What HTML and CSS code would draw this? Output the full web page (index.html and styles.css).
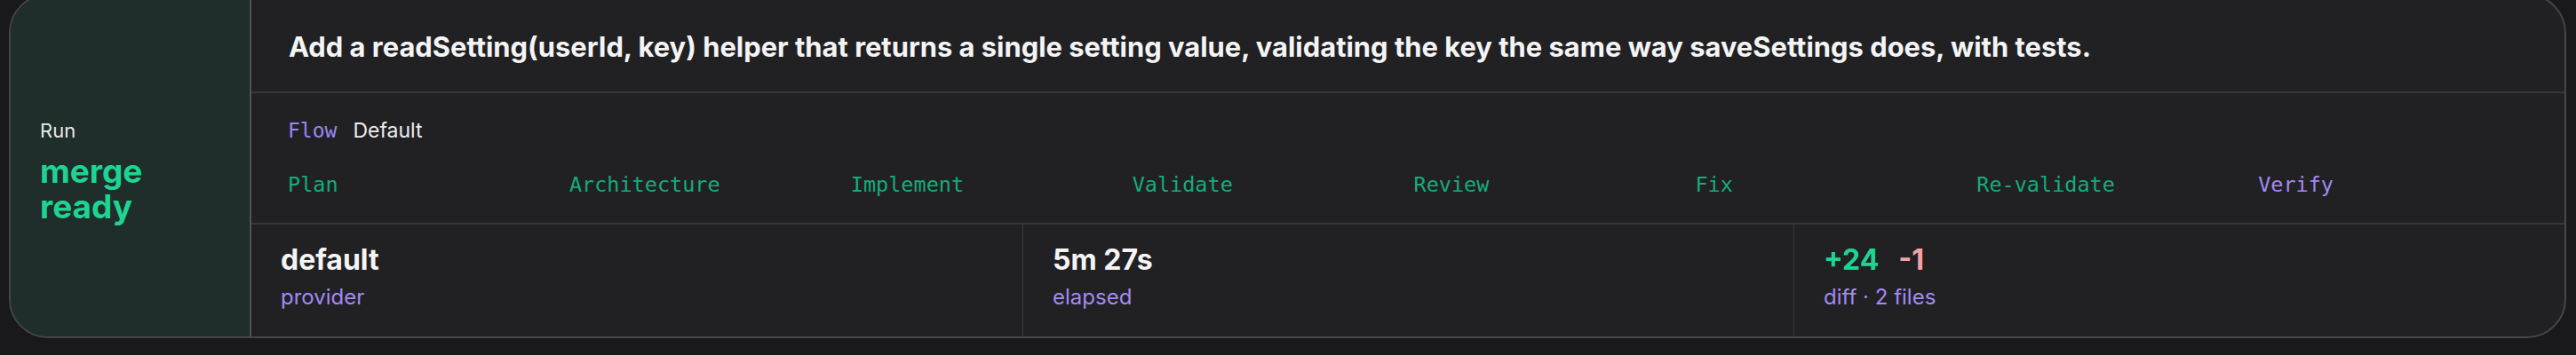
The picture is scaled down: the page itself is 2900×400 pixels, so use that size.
FILE: index.html
```html
<!DOCTYPE html>
<html lang="en">
<head>
<meta charset="utf-8">
<title>Run card</title>
<link rel="stylesheet" href="styles.css">
</head>
<body>
<div class="page">
  <section class="card">
    <aside class="status">
      <div class="status-label">Run</div>
      <div class="status-value">merge<br>ready</div>
    </aside>
    <div class="body">
      <div class="title">Add a readSetting(userId, key) helper that returns a single setting value, validating the key the same way saveSettings does, with tests.</div>
      <div class="flow">
        <div class="flow-head"><span class="mono purple">Flow</span><span class="flow-name">Default</span></div>
        <div class="steps">
          <span class="step done">Plan</span>
          <span class="step done">Architecture</span>
          <span class="step done">Implement</span>
          <span class="step done">Validate</span>
          <span class="step done">Review</span>
          <span class="step done">Fix</span>
          <span class="step done">Re-validate</span>
          <span class="step current">Verify</span>
        </div>
      </div>
      <div class="stats">
        <div class="stat">
          <div class="stat-value">default</div>
          <div class="stat-label">provider</div>
        </div>
        <div class="stat">
          <div class="stat-value">5m 27s</div>
          <div class="stat-label">elapsed</div>
        </div>
        <div class="stat">
          <div class="stat-value"><span class="add">+24</span><span class="del">-1</span></div>
          <div class="stat-label">diff · 2 files</div>
        </div>
      </div>
    </div>
  </section>
</div>
</body>
</html>
```
FILE: styles.css
```css
html, body {
  margin: 0;
  padding: 0;
  background: #19191b;
  overflow: hidden;
}

body {
  font-family: Inter, "Noto Sans", "Liberation Sans", sans-serif;
  color: #f2f2f3;
}

.page {
  margin-top: -7px;
  padding: 0 11px 0 10px;
}

.card {
  display: grid;
  grid-template-columns: 271px 1fr;
  height: 388px;
  box-sizing: border-box;
  border: 2px solid #464648;
  border-radius: 44px;
  overflow: hidden;
  background: #212123;
}

.status {
  background: #1f2d2b;
  border-right: 2px solid #4a5553;
  display: flex;
  flex-direction: column;
  justify-content: center;
  padding: 11px 0 0 33px;
}

.status-label {
  font-size: 22px;
  line-height: 28px;
  color: #e6e8e7;
}

.status-value {
  margin-top: 12px;
  font-size: 37px;
  line-height: 40px;
  font-weight: 700;
  color: #1fd392;
}

.body {
  display: flex;
  flex-direction: column;
  min-width: 0;
}

.title {
  height: 110px;
  box-sizing: border-box;
  display: flex;
  align-items: center;
  padding: 6px 42px 0;
  border-bottom: 2px solid #38383a;
  font-size: 30.9px;
  font-weight: 700;
  white-space: nowrap;
  color: #f4f4f5;
}

.flow {
  height: 148px;
  box-sizing: border-box;
  padding: 27px 42px 0 41px;
  border-bottom: 2px solid #38383a;
}

.flow-head {
  display: flex;
  gap: 18px;
  line-height: 30px;
  align-items: baseline;
}

.mono {
  font-family: "DejaVu Sans Mono", "Liberation Mono", monospace;
  font-size: 23px;
}

.purple {
  color: #9b86f2;
}

.flow-name {
  font-size: 23px;
  color: #ececee;
}

.steps {
  margin-top: 31px;
  display: grid;
  grid-template-columns: repeat(8, 1fr);
  gap: 14px;
  line-height: 30px;
  font-family: "DejaVu Sans Mono", "Liberation Mono", monospace;
  font-size: 23.5px;
}

.step.done {
  color: #15ab7a;
}

.step.current {
  color: #a088f3;
}

.stats {
  flex: 1;
  display: grid;
  grid-template-columns: repeat(3, 1fr);
}

.stat {
  padding: 21px 0 0 33px;
  border-left: 1px solid #38383a;
}

.stat:first-child {
  border-left: none;
}

.stat-value {
  font-size: 32px;
  line-height: 38px;
  font-weight: 700;
  color: #f4f4f5;
  display: flex;
  gap: 22px;
}

.stat-label {
  margin-top: 8px;
  font-size: 24px;
  line-height: 30px;
  color: #a38af2;
}

.add {
  color: #1fd392;
}

.del {
  color: #f6a1a8;
}
```
